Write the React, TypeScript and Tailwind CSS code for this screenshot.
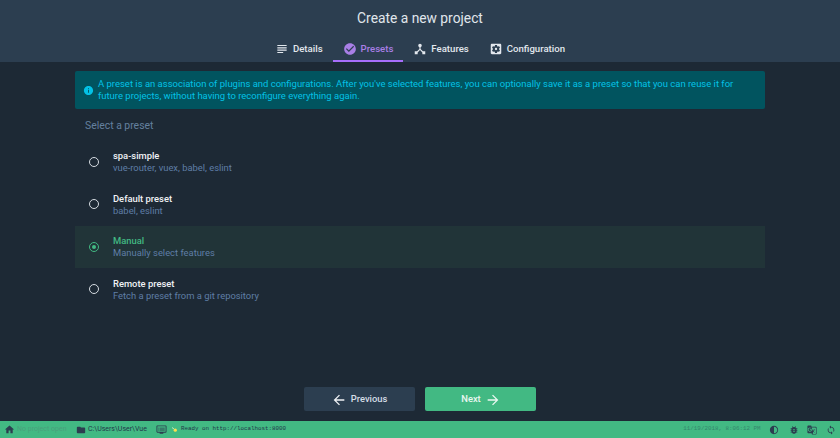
const icons = {
  subject: 'M14 17H4v2h10v-2zm6-8H4v2h16V9zM4 15h16v-2H4v2zM4 5v2h16V5H4z',
  check: 'M12 2C6.48 2 2 6.48 2 12s4.48 10 10 10 10-4.48 10-10S17.52 2 12 2zm-2 15l-5-5 1.41-1.41L10 14.17l7.59-7.59L19 8l-9 9z',
  hub: 'M17 16l-4-4V8.82C14.16 8.4 15 7.3 15 6c0-1.66-1.34-3-3-3S9 4.34 9 6c0 1.3.84 2.4 2 2.82V12l-4 4H3v5h5v-3.05l4-4.2 4 4.2V21h5v-5h-4z',
  settings: 'M12 10c-1.1 0-2 .9-2 2s.9 2 2 2 2-.9 2-2-.9-2-2-2zm7-7H5c-1.11 0-2 .9-2 2v14c0 1.1.89 2 2 2h14c1.11 0 2-.9 2-2V5c0-1.1-.89-2-2-2zm-1.75 9c0 .23-.02.46-.05.68l1.48 1.16c.13.11.17.3.08.45l-1.4 2.42c-.09.15-.27.21-.43.15l-1.74-.7c-.36.28-.76.51-1.18.69l-.26 1.85c-.03.17-.18.3-.35.3h-2.8c-.17 0-.32-.13-.35-.29l-.26-1.85c-.43-.18-.82-.41-1.18-.69l-1.74.7c-.16.06-.34 0-.43-.15l-1.4-2.42c-.09-.15-.05-.34.08-.45l1.48-1.16c-.03-.23-.05-.46-.05-.69 0-.23.02-.46.05-.68l-1.48-1.16c-.13-.11-.17-.3-.08-.45l1.4-2.42c.09-.15.27-.21.43-.15l1.74.7c.36-.28.76-.51 1.18-.69l.26-1.85c.03-.17.18-.3.35-.3h2.8c.17 0 .32.13.35.29l.26 1.85c.43.18.82.41 1.18.69l1.74-.7c.16-.06.34 0 .43.15l1.4 2.42c.09.15.05.34-.08.45l-1.48 1.16c.03.23.05.46.05.69z',
  info: 'M12 2C6.48 2 2 6.48 2 12s4.48 10 10 10 10-4.48 10-10S17.52 2 12 2zm1 15h-2v-6h2v6zm0-8h-2V7h2v2z',
  back: 'M20 11H7.83l5.59-5.59L12 4l-8 8 8 8 1.41-1.41L7.83 13H20v-2z',
  forward: 'M12 4l-1.41 1.41L16.17 11H4v2h12.17l-5.58 5.59L12 20l8-8z',
  home: 'M10 20v-6h4v6h5v-8h3L12 3 2 12h3v8z',
  folder: 'M10 4H4c-1.1 0-1.99.9-1.99 2L2 18c0 1.1.9 2 2 2h16c1.1 0 2-.9 2-2V8c0-1.1-.9-2-2-2h-8l-2-2z',
  dvr: 'M21 3H3c-1.1 0-2 .9-2 2v12c0 1.1.9 2 2 2h5v2h8v-2h5c1.1 0 1.99-.9 1.99-2L23 5c0-1.1-.9-2-2-2zm0 14H3V5h18v12zm-2-9H8v2h11V8zm0 4H8v2h11v-2zM7 8H5v2h2V8zm0 4H5v2h2v-2z',
  contrast: 'M12 2C6.48 2 2 6.48 2 12s4.48 10 10 10 10-4.48 10-10S17.52 2 12 2zm0 18V4c4.41 0 8 3.59 8 8s-3.59 8-8 8z',
  bug: 'M20 8h-2.81c-.45-.78-1.07-1.45-1.82-1.96L17 4.41 15.59 3l-2.17 2.17C12.96 5.06 12.49 5 12 5c-.49 0-.96.06-1.41.17L8.41 3 7 4.41l1.62 1.63C7.88 6.55 7.26 7.22 6.81 8H4v2h2.09c-.05.33-.09.66-.09 1v1H4v2h2v1c0 .34.04.67.09 1H4v2h2.81c1.04 1.79 2.97 3 5.19 3s4.15-1.21 5.19-3H20v-2h-2.09c.05-.33.09-.66.09-1v-1h2v-2h-2v-1c0-.34-.04-.67-.09-1H20V8zm-6 8h-4v-2h4v2zm0-4h-4v-2h4v2z',
  translate: 'M21 4H11l-1-3H3c-1.1 0-2 .9-2 2v15c0 1.1.9 2 2 2h8l1 3h9c1.1 0 2-.9 2-2V6c0-1.1-.9-2-2-2zM7 16c-2.76 0-5-2.24-5-5s2.24-5 5-5c1.35 0 2.48.5 3.35 1.3L9 8.6c-.38-.36-1.04-.78-2-.78-1.71 0-3.1 1.42-3.1 3.18S5.29 14.18 7 14.18c1.98 0 2.72-1.42 2.84-2.16H7v-1.7h4.7c.05.25.08.5.08.84C11.78 14 9.85 16 7 16zm6.17-5.42h3.7c-.43 1.25-1.11 2.43-2.05 3.47-.31-.35-.6-.72-.86-1.1l-.79-2.37zM21.5 20c0 .83-.67 1.5-1.5 1.5h-7l2-2-.8-2.4 1.07-1.06 2.69 2.69.73-.73-2.72-2.7c.9-1.03 1.6-2.25 2.04-3.56H19v-1.04h-3.72V9.64h-1.04v1.04h-1.96L11.18 6H20c.83 0 1.5.67 1.5 1.5V20z',
  sync: 'M12 4V1L8 5l4 4V6c3.31 0 6 2.69 6 6 0 1.01-.25 1.97-.7 2.8l1.46 1.46C19.54 15.03 20 13.57 20 12c0-4.42-3.58-8-8-8zm0 14c-3.31 0-6-2.69-6-6 0-1.01.25-1.97.7-2.8L5.24 7.74C4.46 8.97 4 10.43 4 12c0 4.42 3.58 8 8 8v3l4-4-4-4v3z',
};

function Icon({ d, className }: { d: string; className: string }) {
  return (
    <svg viewBox="0 0 24 24" fill="currentColor" className={className}>
      <path d={d} />
    </svg>
  );
}

function Tab({ icon, label, active }: { icon: string; label: string; active?: boolean }) {
  return (
    <div
      className={`flex h-[24px] items-center gap-[4px] border-b-2 px-[10px] text-[9.6px] font-medium ${
        active ? 'border-[#a66efa] text-[#a97fe6]' : 'border-transparent text-[#e3e8ee]'
      }`}
    >
      <Icon d={icon} className="h-[14px] w-[14px]" />
      <span>{label}</span>
    </div>
  );
}

function Preset({ name, desc, selected }: { name: string; desc: string; selected?: boolean }) {
  return (
    <div className={`mb-[1px] flex h-[41.5px] items-center pl-[14px] ${selected ? 'bg-[#213438]' : ''}`}>
      <div
        className={`flex h-[10px] w-[10px] items-center justify-center rounded-full border-[1.5px] ${
          selected ? 'border-[#42b983]' : 'border-[#d5dbe1]'
        }`}
      >
        {selected && <div className="h-[4px] w-[4px] rounded-full bg-[#42b983]" />}
      </div>
      <div className="ml-[14px] pt-[1px] text-[9.4px] leading-[12px]">
        <div className={`font-medium ${selected ? 'text-[#42b983]' : 'text-[#f0f2f5]'}`}>{name}</div>
        <div className="text-[#5f7ea6]">{desc}</div>
      </div>
    </div>
  );
}

export default function App() {
  return (
    <div className="flex h-[438px] w-[840px] flex-col overflow-hidden bg-[#1d2935] font-['Roboto',sans-serif]">
      <header className="flex h-[62px] flex-col items-center bg-[#2c3e50]">
        <h1 className="mt-[9px] text-[13.8px] leading-[19px] text-[#e0e6ec]">Create a new project</h1>
        <nav className="mt-[10px] flex">
          <Tab icon={icons.subject} label="Details" />
          <Tab icon={icons.check} label="Presets" active />
          <Tab icon={icons.hub} label="Features" />
          <Tab icon={icons.settings} label="Configuration" />
        </nav>
      </header>

      <main className="flex flex-1 flex-col px-[75px] pt-[9px]">
        <div className="flex h-[38px] items-center rounded-[2px] bg-[#01545f] pl-[8px] pr-[12px] text-[9.47px] leading-[12px] text-[#03c2e6]">
          <Icon d={icons.info} className="mr-[4px] h-[11px] w-[11px] shrink-0" />
          <p>
            A preset is an association of plugins and configurations. After you've selected features, you can optionally save it as a preset so that you can reuse it for future projects, without having to reconfigure everything again.
          </p>
        </div>
        <div className="mt-[10px] pl-[10px] text-[10.4px] leading-[14px] text-[#64809f]">Select a preset</div>
        <div className="mt-[8px]">
          <Preset name="spa-simple" desc="vue-router, vuex, babel, eslint" />
          <Preset name="Default preset" desc="babel, eslint" />
          <Preset name="Manual" desc="Manually select features" selected />
          <Preset name="Remote preset" desc="Fetch a preset from a git repository" />
        </div>
        <div className="mt-auto mb-[10px] flex justify-center gap-[10px] pr-[1px]">
          <button className="flex h-[24px] w-[111px] items-center justify-center gap-[4px] rounded-[2px] bg-[#2c3e50] pt-[1px] text-[9.4px] font-medium text-[#d5dde6]">
            <Icon d={icons.back} className="h-[16px] w-[16px] text-[#eef1f4]" />
            Previous
          </button>
          <button className="flex h-[24px] w-[111px] items-center justify-center gap-[4px] rounded-[2px] bg-[#42b983] pl-[2px] pt-[1px] text-[9.4px] font-medium text-[#eaf7f1]">
            Next
            <Icon d={icons.forward} className="h-[16px] w-[16px]" />
          </button>
        </div>
      </main>

      <footer className="flex h-[17px] items-center bg-[#42b983] pl-[4px] pr-[4px] text-[7px] text-[#1d2935]">
        <Icon d={icons.home} className="h-[11px] w-[11px] text-[#2c3e50]" />
        <span className="ml-[2px] w-[50px] whitespace-nowrap text-[#4aa07c]">No project open</span>
        <Icon d={icons.folder} className="ml-[9px] h-[10px] w-[10px] text-[#2c3e50]" />
        <span className="ml-[2px] text-[#22374a]">C:\Users\User\Vue</span>
        <Icon d={icons.dvr} className="ml-[9.5px] h-[11px] w-[11px] text-[#2c3e50]" />
        <svg viewBox="0 0 5 5" className="ml-[4.5px] h-[5px] w-[5px]">
          <path d="M0 0.5L2 2" stroke="#e8f3c8" strokeWidth="0.8" />
          <circle cx="3.3" cy="3.2" r="1.6" fill="#ffe14d" />
        </svg>
        <span className="ml-[4px] font-['Liberation_Mono',monospace] text-[5.85px] text-[#22374a]">Ready on http://localhost:8000</span>
        <span className="ml-auto font-['Liberation_Mono',monospace] text-[5.85px] text-[#36866d]">11/19/2018, 8:06:12 PM</span>
        <Icon d={icons.contrast} className="ml-[8px] h-[10px] w-[10px] text-[#2c3e50]" />
        <Icon d={icons.bug} className="ml-[10px] h-[10px] w-[10px] text-[#2c3e50]" />
        <Icon d={icons.translate} className="ml-[8.5px] h-[10px] w-[10px] text-[#2c3e50]" />
        <Icon d={icons.sync} className="ml-[9px] h-[10px] w-[10px] text-[#2c3e50]" />
      </footer>
    </div>
  );
}
